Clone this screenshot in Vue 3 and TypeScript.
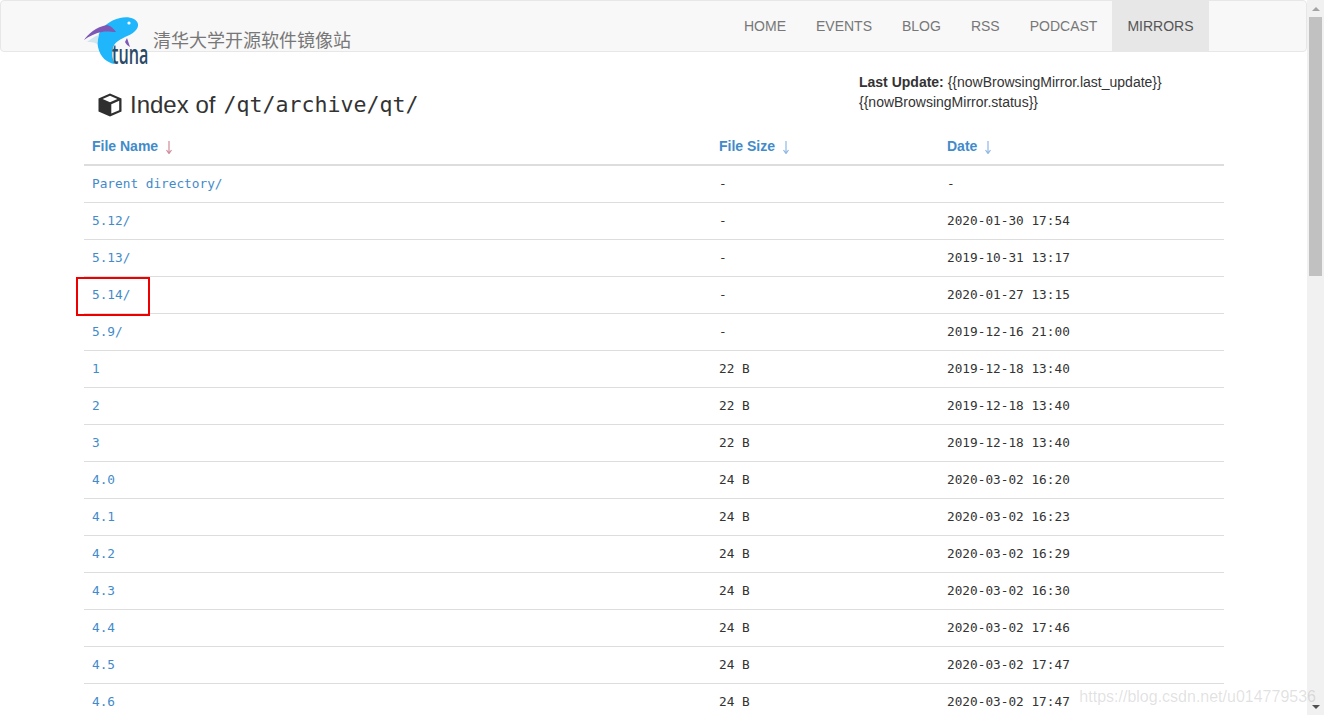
<template>
  <div class="page">
    <div class="content">
      <nav class="navbar">
        <div class="nav-inner">
          <a class="brand">
            <svg class="logo" viewBox="0 0 66 52" width="66" height="52">
              <path class="fish" d="M36 2 C45 0 53 3 54 8 C55 13 49 18 41 21 C35 24 30 27 29 32 C28 38 28 43 31 48 C23 47 16 41 14 31 C12 21 16 13 23 8 C27 5 31 3 36 2 Z" />
              <path class="fin-pale" d="M3 26 C7 23 11 20 15 19 L13 28 C10 26 6 26 3 26 Z" />
              <path class="fin" d="M0 24 C4 18 12 11 23 9 C27 10 30 13 32 16 C28 16 22 15 18 16 C12 17 5 20 0 24 Z" />
              <path class="fin" d="M43 22 C44 25 45 28 46 31 C44 30 42 28 41 26 Z" />
              <circle class="eye" cx="45" cy="7" r="1.6" />
              <text class="tuna" transform="translate(28 48) scale(0.6 1)">tuna</text>
            </svg>
            <span class="brand-name">清华大学开源软件镜像站</span>
          </a>
          <ul class="nav-links">
            <li v-for="item in navItems" :key="item" :class="{ active: item === 'MIRRORS' }">{{ item }}</li>
          </ul>
        </div>
      </nav>

      <div class="container">
        <div class="title-row">
          <h3 class="title">
            <svg class="cube" viewBox="0 0 24 24" width="24" height="24">
              <path d="M12 0.5 L23.5 5.5 V18.5 L12 23.5 L0.5 18.5 V5.5 Z M12 2.8 L4.6 6 L12 9.2 L19.4 6 Z M13.3 11.2 V20.6 L21.2 17.2 V7.8 Z" fill-rule="evenodd" />
            </svg>
            <span>Index of</span>
            <span class="path">/qt/archive/qt/</span>
          </h3>
          <div class="status">
            <div><b>Last Update:</b> {{ lastUpdate }}</div>
            <div>{{ mirrorStatus }}</div>
          </div>
        </div>

        <table class="files">
          <thead>
            <tr>
              <th class="col-name">
                File Name
                <svg class="arrow red" viewBox="0 0 8 13" width="8" height="13"><path d="M4 0 V12 M1.5 9 L4 12.5 L6.5 9" /></svg>
              </th>
              <th class="col-size">
                File Size
                <svg class="arrow" viewBox="0 0 8 13" width="8" height="13"><path d="M4 0 V12 M1.5 9 L4 12.5 L6.5 9" /></svg>
              </th>
              <th class="col-date">
                Date
                <svg class="arrow" viewBox="0 0 8 13" width="8" height="13"><path d="M4 0 V12 M1.5 9 L4 12.5 L6.5 9" /></svg>
              </th>
            </tr>
          </thead>
          <tbody>
            <tr v-for="row in rows" :key="row.name">
              <td>
                <a class="file-link" :class="{ marked: row.name === '5.14/' }">{{ row.name }}</a>
              </td>
              <td>{{ row.size }}</td>
              <td>{{ row.date }}</td>
            </tr>
          </tbody>
        </table>
      </div>
    </div>

    <div class="scrollbar">
      <div class="sb-btn"><span class="tri up"></span></div>
      <div class="sb-track"><div class="sb-thumb"></div></div>
      <div class="sb-btn"><span class="tri down"></span></div>
    </div>

    <div class="watermark">https://blog.csdn.net/u014779536</div>
  </div>
</template>

<script setup lang="ts">
interface FileRow {
  name: string;
  size: string;
  date: string;
}

const navItems = ['HOME', 'EVENTS', 'BLOG', 'RSS', 'PODCAST', 'MIRRORS'];

const lastUpdate = '{{nowBrowsingMirror.last_update}}';
const mirrorStatus = '{{nowBrowsingMirror.status}}';

const rows: FileRow[] = [
  { name: 'Parent directory/', size: '-', date: '-' },
  { name: '5.12/', size: '-', date: '2020-01-30 17:54' },
  { name: '5.13/', size: '-', date: '2019-10-31 13:17' },
  { name: '5.14/', size: '-', date: '2020-01-27 13:15' },
  { name: '5.9/', size: '-', date: '2019-12-16 21:00' },
  { name: '1', size: '22 B', date: '2019-12-18 13:40' },
  { name: '2', size: '22 B', date: '2019-12-18 13:40' },
  { name: '3', size: '22 B', date: '2019-12-18 13:40' },
  { name: '4.0', size: '24 B', date: '2020-03-02 16:20' },
  { name: '4.1', size: '24 B', date: '2020-03-02 16:23' },
  { name: '4.2', size: '24 B', date: '2020-03-02 16:29' },
  { name: '4.3', size: '24 B', date: '2020-03-02 16:30' },
  { name: '4.4', size: '24 B', date: '2020-03-02 17:46' },
  { name: '4.5', size: '24 B', date: '2020-03-02 17:47' },
  { name: '4.6', size: '24 B', date: '2020-03-02 17:47' },
];
</script>

<style>
html,
body {
  margin: 0;
  height: 100%;
  overflow: hidden;
  background: #fff;
}
</style>

<style scoped>
.page {
  position: relative;
  display: flex;
  height: 100vh;
  overflow: hidden;
  font-family: "Liberation Sans", Arial, sans-serif;
  font-size: 14px;
  line-height: 20px;
  color: #333;
}

.content {
  flex: 1;
  min-width: 0;
  overflow: hidden;
}

.navbar {
  box-sizing: border-box;
  height: 52px;
  background: #f8f8f8;
  border: 1px solid #e7e7e7;
  border-radius: 4px;
}

.nav-inner {
  display: flex;
  justify-content: space-between;
  padding: 0 97.5px 0 83px;
}

.brand {
  display: flex;
  align-items: flex-start;
  height: 50px;
}

.logo {
  flex: none;
  margin-top: 15px;
  overflow: visible;
}

.fish {
  fill: #1fb6fb;
}

.fin {
  fill: #7d58b4;
}

.fin-pale {
  fill: #cfe6ee;
}

.eye {
  fill: #fff;
}

.tuna {
  font-family: "Open Sans", "Liberation Sans", sans-serif;
  font-size: 27px;
  font-weight: 600;
  fill: #2b4a68;
}

.brand-name {
  margin: 28px 0 0 3px;
  font-family: "Noto Sans CJK SC", sans-serif;
  font-size: 18px;
  line-height: 20px;
  color: #777;
}

.nav-links {
  display: flex;
  margin: 0;
  padding: 0;
  list-style: none;
}

.nav-links li {
  padding: 15px 15px;
  height: 20px;
  line-height: 20px;
  color: #777;
}

.nav-links li.active {
  color: #555;
  background: #e7e7e7;
}

.container {
  padding: 0 83px 0 84px;
}

.title-row {
  display: flex;
  justify-content: space-between;
  height: 76px;
}

.title {
  display: flex;
  align-items: center;
  gap: 8px;
  height: 33px;
  margin: 36px 0 0 14px;
  font-size: 24px;
  font-weight: 400;
  line-height: 33px;
}

.cube {
  fill: #2f2f2f;
}

.path {
  font-family: "DejaVu Sans Mono", monospace;
  font-size: 21.6px;
}

.status {
  width: 365px;
  margin-top: 20px;
}

.files {
  width: 1140px;
  border-collapse: collapse;
  table-layout: fixed;
}

.col-name {
  width: 611px;
}

.col-size {
  width: 212px;
}

th {
  height: 20px;
  padding: 8px;
  border-bottom: 2px solid #ddd;
  color: #428bca;
  text-align: left;
  font-weight: 700;
  line-height: 20px;
}

.arrow {
  margin-left: 3px;
  vertical-align: -3px;
  fill: none;
  stroke: #8fb8e4;
  stroke-width: 1.2;
}

.arrow.red {
  stroke: #cf8c9a;
}

td {
  height: 20px;
  padding: 8px;
  border-top: 1px solid #ddd;
  font-family: "DejaVu Sans Mono", monospace;
  font-size: 12.75px;
  line-height: 20px;
  white-space: nowrap;
}

.file-link {
  position: relative;
  color: #428bca;
}

.file-link.marked::after {
  content: "";
  position: absolute;
  left: -16px;
  top: -10px;
  width: 70px;
  height: 35px;
  border: 2px solid #ee0000;
}

.watermark {
  position: absolute;
  right: 8px;
  bottom: 8px;
  font-size: 16px;
  white-space: nowrap;
  color: rgba(120, 120, 120, 0.22);
}

.scrollbar {
  display: flex;
  flex: none;
  flex-direction: column;
  width: 17px;
  background: #f1f1f1;
}

.sb-btn {
  display: flex;
  flex: none;
  align-items: center;
  justify-content: center;
  height: 17px;
}

.sb-track {
  flex: 1;
}

.sb-thumb {
  width: 13px;
  height: 259px;
  margin-left: 2px;
  background: #c1c1c1;
}

.tri {
  width: 0;
  height: 0;
  border-left: 4px solid transparent;
  border-right: 4px solid transparent;
}

.tri.up {
  border-bottom: 4px solid #a3a3a3;
}

.tri.down {
  border-top: 4px solid #505050;
}
</style>
